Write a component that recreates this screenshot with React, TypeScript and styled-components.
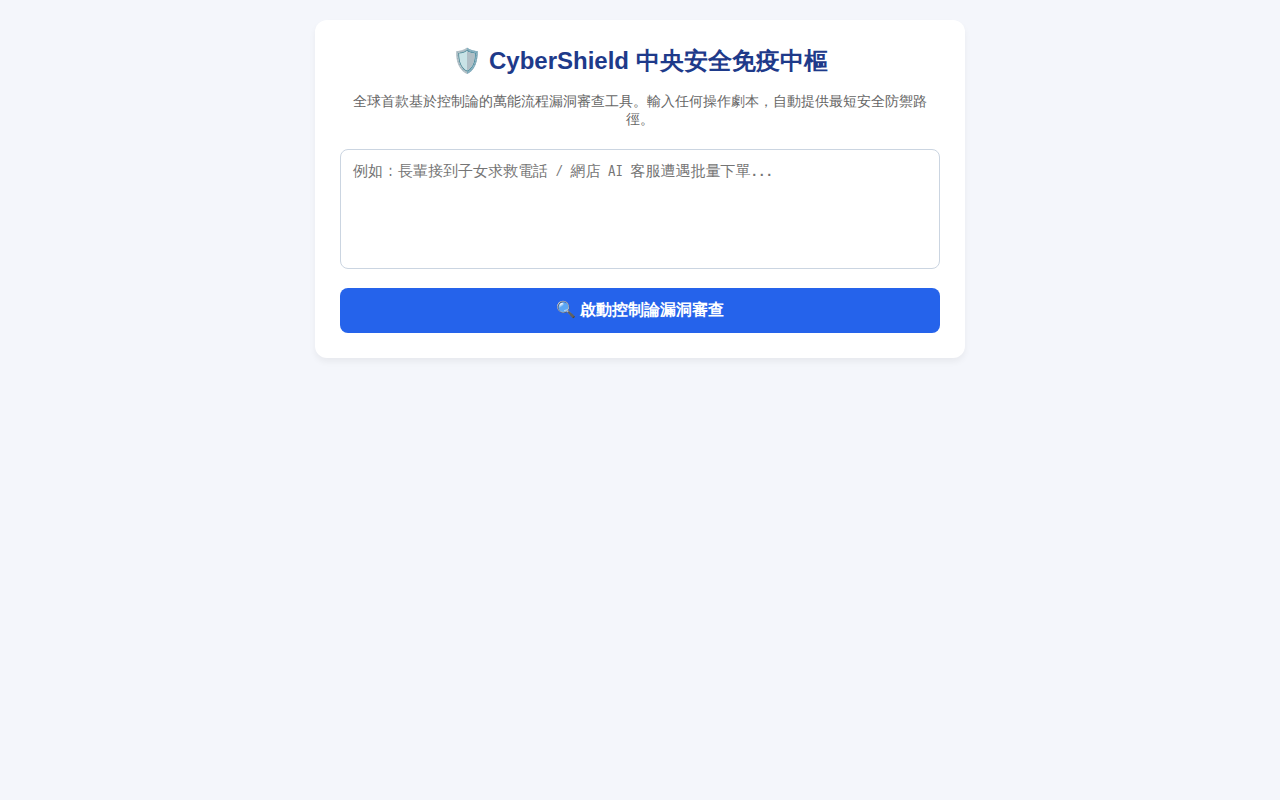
import React, { useState } from "react";
import styled, { createGlobalStyle } from "styled-components";

const GlobalStyle = createGlobalStyle`
  body {
    margin: 0;
    padding: 20px;
    background: #f4f6fb;
    font-family: "Liberation Sans", sans-serif;
  }
`;

const Card = styled.main`
  box-sizing: border-box;
  max-width: 650px;
  margin: 0 auto;
  padding: 25px;
  border-radius: 12px;
  background: #fff;
  box-shadow: 0 4px 6px rgba(0, 0, 0, 0.05);
`;

const Title = styled.h1`
  margin: 0 0 16px;
  color: #1e3a8a;
  font-size: 24px;
  text-align: center;
`;

const Subtitle = styled.p`
  margin: 0 0 20px;
  color: #666;
  font-size: 14px;
  text-align: center;
`;

const ScriptInput = styled.textarea`
  display: block;
  box-sizing: border-box;
  width: 100%;
  height: 120px;
  padding: 12px;
  border: 1px solid #cbd5e1;
  border-radius: 8px;
  font-family: "WenQuanYi Zen Hei Mono", "Noto Sans Mono CJK JP", monospace;
  font-size: 15px;
  line-height: 18px;
  resize: none;
`;

const AuditButton = styled.button`
  display: block;
  width: 100%;
  margin-top: 19px;
  padding: 12px;
  border: none;
  border-radius: 8px;
  background: #2563eb;
  color: #fff;
  font-family: inherit;
  font-size: 16px;
  font-weight: bold;
  cursor: pointer;
`;

export default function App() {
  const [script, setScript] = useState("");
  return (
    <>
      <GlobalStyle />
      <Card>
        <Title>🛡️ CyberShield 中央安全免疫中樞</Title>
        <Subtitle>全球首款基於控制論的萬能流程漏洞審查工具。輸入任何操作劇本，自動提供最短安全防禦路徑。</Subtitle>
        <ScriptInput
          value={script}
          onChange={(e) => setScript(e.target.value)}
          placeholder="例如：長輩接到子女求救電話 / 網店 AI 客服遭遇批量下單..."
        />
        <AuditButton type="button">🔍 啟動控制論漏洞審查</AuditButton>
      </Card>
    </>
  );
}
